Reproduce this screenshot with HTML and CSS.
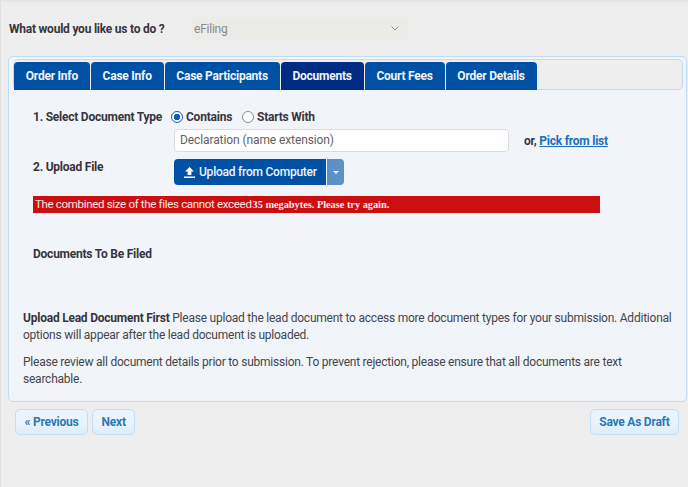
FILE: index.html
```html
<!DOCTYPE html>
<html lang="en">
<head>
<meta charset="utf-8">
<title>Documents</title>
<link rel="stylesheet" href="styles.css">
</head>
<body>
<div class="page">
  <div class="action-row">
    <label class="action-label">What would you like us to do ?</label>
    <div class="action-select"><span>eFiling</span>
      <svg class="chev" width="8" height="5" viewBox="0 0 8 5"><path d="M.5.5 4 4 7.5.5" fill="none" stroke="#8d8d8d" stroke-width="1"/></svg>
    </div>
  </div>
  <section class="panel">
    <nav class="tabs">
      <a class="tab">Order Info</a>
      <a class="tab">Case Info</a>
      <a class="tab">Case Participants</a>
      <a class="tab active">Documents</a>
      <a class="tab">Court Fees</a>
      <a class="tab">Order Details</a>
    </nav>
    <div class="body">
      <div class="step step-one">
        <div class="step-label">1. Select Document Type</div>
        <div class="step-main">
          <div class="radios">
            <span class="radio on"></span><span class="radio-text">Contains</span>
            <span class="radio"></span><span class="radio-text">Starts With</span>
          </div>
          <div class="doc-row">
            <div class="doc-input">Declaration (name extension)</div>
            <div class="pick">or, <a>Pick from list</a></div>
          </div>
        </div>
      </div>
      <div class="step step-two">
        <div class="step-label">2. Upload File</div>
        <div class="upload">
          <div class="upload-main">
            <svg width="13" height="13" viewBox="0 0 13 13"><path d="M6.5 1 11 5.6H8.4V9H4.600V5.600H2z M1 10.600h11v1.300H1z" fill="#fff"/></svg>
            <span>Upload from Computer</span>
          </div>
          <div class="upload-caret"><i></i></div>
        </div>
      </div>
      <div class="error">The combined size of the files cannot exceed<span class="error-serif">35 megabytes. Please try again.</span></div>
      <h3 class="filed">Documents To Be Filed</h3>
      <p class="note lead-note"><b>Upload Lead Document First</b> Please upload the lead document to access more document types for your submission. Additional options will appear after the lead document is uploaded.</p>
      <p class="note">Please review all document details prior to submission. To prevent rejection, please ensure that all documents are text searchable.</p>
    </div>
  </section>
  <div class="footer">
    <div class="footer-left">
      <a class="btn">« Previous</a>
      <a class="btn">Next</a>
    </div>
    <a class="btn">Save As Draft</a>
  </div>
</div>
</body>
</html>
```
FILE: styles.css
```css
* { box-sizing: border-box; }
html, body { margin: 0; height: 100%; }
body {
  background: #eeeeee;
  font-family: Roboto, "Liberation Sans", sans-serif;
  font-size: 12px;
  letter-spacing: -.23px;
  color: #3a3a44;
  overflow: hidden;
}
.page {
  height: 487px;
  border-top: 2px solid #e6e6e6;
  border-left: 1px solid #e0e0e0;
  padding: 15px 1px 0 7px;
}
.action-row { display: flex; align-items: center; height: 23px; padding-left: 1px; }
.action-label { width: 183px; font-weight: 700; color: #38343c; }
.action-select {
  width: 216px; height: 23px;
  background: #ebebe8; border-radius: 4px;
  display: flex; align-items: center; justify-content: space-between;
  padding: 0 9px 0 2px; color: #8a8a8a;
}
.panel {
  margin-top: 16px;
  height: 346px;
  background: #f1f5f9;
  border: 1px solid #c3dbef;
  border-radius: 5px;
  padding: 2px 3px 0 4px;
}
.tabs {
  display: flex; gap: 1px; height: 31px; padding: 2px 0 0 0;
  background: #eeeeee; border: 1px solid #c3dbef; border-radius: 5px;
}
.tab {
  height: 28px; padding: 0 11.800px; display: flex; align-items: center;
  background: #0051a3; color: #eef4fa; font-weight: 700;
  border-radius: 4px 4px 0 0;
}
.tab.active { background: #002b82; }
.body { padding: 0 0 0 10px; }
.step { display: flex; }
.step-one { padding: 20px 0 0 10px; }
.step-label { width: 141px; font-weight: 700; line-height: 14px; color: #38343c; }
.radios { display: flex; align-items: center; height: 14px; font-weight: 700; color: #38343c; margin-left: -3px; }
.radio { width: 12px; height: 12px; border-radius: 50%; border: 1.500px solid #8b8b8b; background: #fff; margin-right: 3px; }
.radio.on { border-color: #0b5fc4; background: radial-gradient(circle, #0b5fc4 0 3px, #fff 3.500px); }
.radio-text { margin-right: 10px; }
.doc-row { display: flex; align-items: center; margin-top: 5px; }
.doc-input {
  width: 335px; height: 23px; background: #fff; border: 1px solid #dcdcdc; border-radius: 4px;
  padding: 0 5px; line-height: 21px; color: #5f5f5f; letter-spacing: -.1px;
}
.pick { margin-left: 15px; font-weight: 700; color: #38343c; }
.pick a { color: #1a6fbe; text-decoration: underline; }
.step-two { padding: 8px 0 0 10px; }
.upload { display: flex; height: 26px; gap: 1px; margin-top: -1px; }
.upload-main {
  width: 152px; display: flex; align-items: center; gap: 3px; padding-left: 9px;
  background: #0051a3; color: #f0f5fa; border-radius: 4px 0 0 4px; font-weight: 500;
}
.upload-caret {
  width: 17px; background: #5b90c6; border-radius: 0 4px 4px 0;
  display: flex; align-items: center; justify-content: center;
}
.upload-caret i { width: 0; height: 0; border: 3px solid transparent; border-top-color: #fff; border-bottom: 0; }
.error {
  margin: 11px 0 0 10px; width: 567px; height: 17px; line-height: 16px;
  background: #cb0f10; color: #fbeaea; padding-left: 2px; font-size: 11.500px; letter-spacing: -.32px;
}
.error-serif { font-family: "Liberation Serif", serif; font-weight: 700; font-size: 10.300px; letter-spacing: 0; margin-left: 1px; }
.filed { margin: 34px 0 0 10px; font-size: 12px; line-height: 14px; font-weight: 700; color: #38343c; }
.note { margin: 0; line-height: 16.500px; color: #45454d; }
.note b { color: #38343c; }
.lead-note { margin-top: 49px; }
.note + .note { margin-top: 11px; }
.footer { display: flex; justify-content: space-between; margin-top: 7px; padding: 0 8px 0 7px; }
.footer-left { display: flex; gap: 4px; }
.btn {
  height: 26px; padding: 0 8.500px; display: flex; align-items: center;
  border: 1px solid #c3dff4; border-radius: 5px;
  background: linear-gradient(#ebf4fc 0 50%, #dcedfb 100%);
  color: #2a78b8; font-weight: 700;
}
```
